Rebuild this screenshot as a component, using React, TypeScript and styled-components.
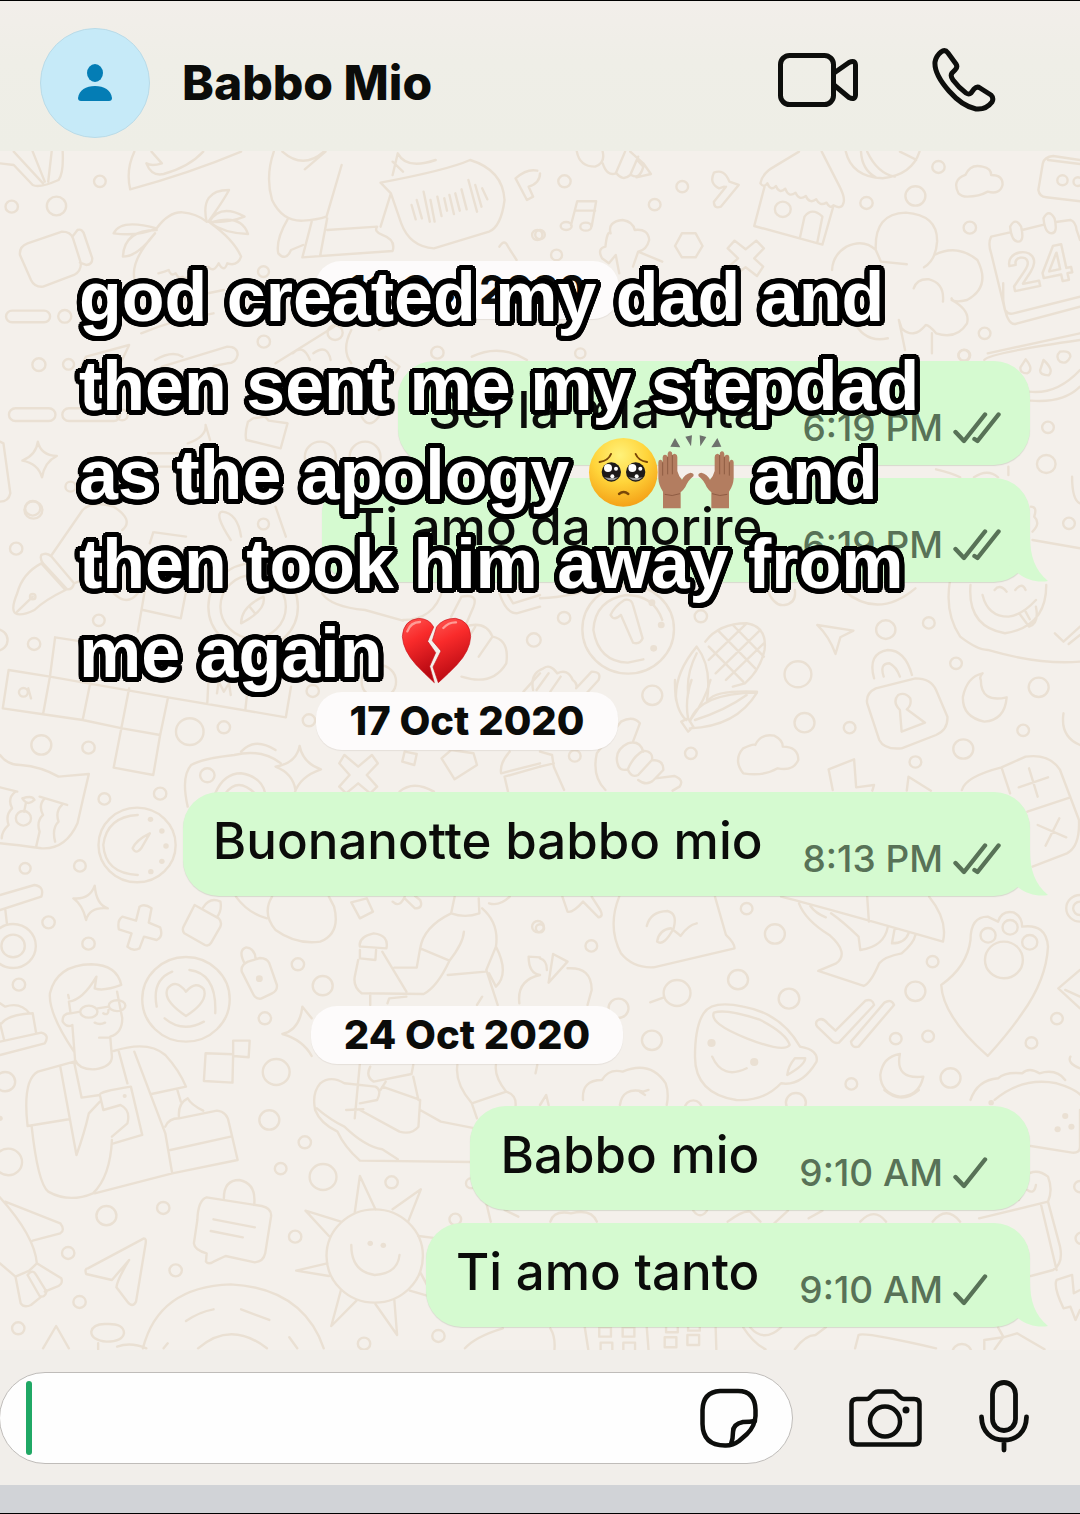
import React from "react";
import styled, { createGlobalStyle } from "styled-components";

const sans = `Inter, "Liberation Sans", sans-serif`;

const GlobalStyle = createGlobalStyle`
  *, *::before, *::after { box-sizing: border-box; }
  body { margin: 0; background: #f4f0eb; }
`;

const Screen = styled.div`
  display: flex;
  flex-direction: column;
  min-height: 100vh;
  overflow: hidden;
  font-family: ${sans};
  color: #0b0c0a;
  border-top: 1px solid #000;
  border-bottom: 1px solid #000;
`;

const Header = styled.header`
  display: flex;
  align-items: center;
  height: 150px;
  padding: 14px 84px 0 40px;
  background: linear-gradient(180deg, #f2eeea 0%, #efeee7 40%, #eeeee6 100%);
`;

const Avatar = styled.div`
  display: grid;
  place-items: center;
  width: 110px;
  height: 110px;
  border: 1px solid #b9dbe8;
  border-radius: 50%;
  background: #c6eaf8;
`;

const Contact = styled.h1`
  flex: 1;
  margin: 0 0 0 32px;
  font-size: 48px;
  font-weight: 800;
  line-height: 56px;
`;

const IconButton = styled.button`
  display: flex;
  padding: 0;
  border: 0;
  background: none;
  color: #0d0e0c;
`;

const HeaderActions = styled.div`
  display: flex;
  align-items: center;
  gap: 74px;
  padding-bottom: 6px;
`;

const Chat = styled.main`
  position: relative;
  flex: 1;
  display: flex;
  flex-direction: column;
  gap: 110px;
  padding: 110px 50px 23px 16px;
  background: #f4f0eb;
`;

const Wallpaper = styled.svg`
  position: absolute;
  inset: 0;
  width: 100%;
  height: 100%;
`;

const Day = styled.section`
  position: relative;
  display: flex;
  flex-direction: column;
  gap: 42px;
`;

const DateRow = styled.div`
  display: flex;
  justify-content: center;
  padding-right: 112px;
`;

const DatePill = styled.time`
  padding: 0 33px;
  border-radius: 26px;
  background: #fdfbfb;
  box-shadow: 0 1px 1px rgba(60, 40, 20, 0.08);
  font-size: 40px;
  font-weight: 800;
  line-height: 58px;
`;

const Messages = styled.div`
  display: flex;
  flex-direction: column;
  align-items: flex-end;
  gap: 13px;
`;

const Bubble = styled.div`
  position: relative;
  display: flex;
  align-items: flex-end;
  gap: 40px;
  height: 104px;
  padding: 0 29px 0 30px;
  border-radius: 36px;
  background: #d5fad0;
  box-shadow: 0 1px 1px rgba(40, 70, 30, 0.14);
`;

const MessageText = styled.p`
  margin: 0;
  padding-bottom: 25px;
  font-size: 51px;
  font-weight: 540;
  line-height: 60px;
  white-space: nowrap;
`;

const Meta = styled.span`
  display: flex;
  align-items: center;
  gap: 10px;
  padding-bottom: 16px;
  color: #587257;
  font-size: 37px;
  font-weight: 540;
  line-height: 42px;
  white-space: nowrap;
`;

const Tail = styled.svg`
  position: absolute;
  right: -18px;
  bottom: 0;
  width: 48px;
  height: 46px;
`;

// Offsets on a ring of about five pixels: together they give letters a soft-cornered outline.
const ring = [[5, 0], [5, 1], [5, 2], [4, 3], [4, 4], [3, 4], [2, 5], [1, 5], [0, 5], [3, 0], [0, 3], [2, 2]];
const outline = ring
  .flatMap(([x, y]) => [[x, y], [-x, y], [x, -y], [-x, -y]])
  .map(([x, y]) => `${x}px ${y}px 0 #000`)
  .join(", ");

const Caption = styled.p`
  position: absolute;
  left: 79px;
  top: 102px;
  margin: 0;
  font-family: "Liberation Sans", Arial, sans-serif;
  font-size: 70px;
  font-weight: 700;
  line-height: 89px;
  color: #fff;
  white-space: nowrap;
  text-shadow: ${outline};
`;

const CaptionLine = styled.span`
  display: block;
`;

const Emoji = styled.svg<{ $w: number; $drop: number }>`
  width: ${(p) => p.$w}px;
  height: ${(p) => p.$w}px;
  vertical-align: -${(p) => p.$drop}px;
  overflow: visible;
`;

const Composer = styled.footer`
  display: flex;
  align-items: center;
  height: 135px;
  padding-right: 51px;
  background: #f1eeea;
`;

const Field = styled.div`
  flex: 1;
  min-width: 0;
  display: flex;
  align-items: center;
  height: 92px;
  padding: 0 34px 0 26px;
  border: 1px solid #bfbcb9;
  border-radius: 46px;
  background: #fefefe;
  margin-left: -1px;
`;

const Caret = styled.span`
  width: 6px;
  height: 74px;
  border-radius: 3px;
  background: #20a865;
`;

const TextBox = styled.input`
  flex: 1;
  width: 100%;
  min-width: 0;
  height: 74px;
  padding: 0 16px;
  border: 0;
  outline: 0;
  background: transparent;
  caret-color: transparent;
  font: 500 50px/60px ${sans};
`;

const ComposerActions = styled.div`
  display: flex;
  align-items: center;
  gap: 57px;
  padding-left: 56px;
`;

const Keyboard = styled.div`
  height: 28px;
  background: #d1d3d7;
`;

const Patch = ({ x, y, d, c = [], dots = [], children }: {
  x: number;
  y: number;
  d: string;
  c?: number[][];
  dots?: number[][];
  children?: React.ReactNode;
}) => (
  <g transform={`translate(${x} ${y}) scale(0.3444 0.3333)`}>
    <path d={d} vectorEffect="non-scaling-stroke" />
    {c.map(([cx, cy, r], i) => (
      <circle key={i} cx={cx} cy={cy} r={r} vectorEffect="non-scaling-stroke" />
    ))}
    {dots.map(([cx, cy, r], i) => (
      <circle key={i} cx={cx} cy={cy} r={r} fill="#eae0d3" stroke="none" />
    ))}
    {children}
  </g>
);

const Doodles = () => (
  <Wallpaper
    viewBox="0 151 1080 1199"
    preserveAspectRatio="xMidYMin slice"
    fill="none"
    stroke="#eae0d3"
    strokeWidth="2.4"
    strokeLinecap="round"
    strokeLinejoin="round"
    aria-hidden="true"
  >
    <Patch
      x={540}
      y={0}
      c={[[71,544,18],[413,560,17],[333,614,17],[1157,501,18],[1090,588,29],[948,609,18],[1248,683,18],[1291,1000,17],[0,704,14],[48,765,16],[1231,1066,16],[705,628,23],[1517,541,15],[1562,545,13]]}
      d="M107 455Q115 500 160 500Q190 490 182 455M182 490Q195 530 220 520L247 455M222 520Q240 545 262 525L285 470M265 525Q290 540 300 500L282 480M262 455L300 490L322 522L280 532
      M90 675L108 604L163 604L150 680M103 632L160 632M60 678a16 12 0 1 0 32 0a16 12 0 1 0 -32 0M117 680a16 12 0 1 0 32 0a16 12 0 1 0 -32 0
      M505 518Q535 505 550 545L577 555L525 620Q505 628 505 605L540 560M505 518Q490 550 520 565L535 560
      M752 455L680 500Q645 520 640 550q10 15 20 0q10 25 25 8q10 25 27 8q10 28 30 12q10 25 30 10q10 25 30 10q10 22 30 10q10 20 20 8q25 15 30-10Q885 590 870 560L818 455M652 560L622 678L820 734L852 618M755 712L768 650Q790 620 820 650L805 728
      M888 455Q905 530 995 535Q1080 525 1102 455M932 455Q935 510 975 532M950 455Q980 520 1030 530M1045 455Q1085 475 1092 480
      M1215 580Q1195 540 1235 525Q1250 490 1285 500Q1310 505 1310 525Q1345 525 1343 555Q1335 585 1300 575Q1275 590 1240 590Q1225 590 1215 580Z
      M1568 480L1490 468Q1465 470 1460 490L1447 570Q1450 590 1470 592L1568 604M1475 480L1568 492
      M412 700L452 700L472 738L452 772L412 772L392 738Z
      M190 740Q195 690 205 700Q195 665 240 660Q270 665 275 690Q315 685 317 720Q310 750 285 755L270 800M190 740Q165 745 180 775L200 790L220 765L230 820M285 755L355 785
      M545 745L565 722L597 748L628 722L650 745L622 775L648 800L630 828L597 802L570 822L548 800L575 775Z
      M975 750Q970 640 1062 638Q1155 645 1153 725Q1150 780 1115 802M1145 765Q1210 730 1270 780Q1310 860 1240 900Q1200 910 1195 895M975 750Q940 715 890 740Q850 765 848 810M975 750L990 785L1065 793M1085 865Q1095 835 1130 838Q1175 850 1170 905M1195 900Q1250 930 1240 970Q1210 1020 1150 1000Q1130 975 1120 975Q1085 1020 1050 985L1042 960L1060 1050M1138 1000L1138 1060M910 960Q940 1030 1010 1015
      M1365 697L1310 710Q1300 730 1310 760L1350 930Q1360 945 1375 940L1568 890M1400 690L1463 674M1498 666L1540 660Q1555 665 1558 690L1568 720M1345 850L1345 900Q1355 975 1380 972L1568 920M1365 680q15-30 32 0q10 45-8 45q-20 0-24-45M1462 655q15-30 32 0q10 45-8 45q-20 0-24-45M1300 1060L1568 1000"
    >
      <text
        x="1370"
        y="875"
        transform="rotate(-12 1370 875)"
        fontFamily="Inter, sans-serif"
        fontSize="150"
        fontWeight="600"
        strokeWidth="7"
      >
        24
      </text>
    </Patch>
    <Patch
      x={0}
      y={150}
      c={[[290,94,17],[34,170,18],[164,168,28],[188,499,19],[766,575,18],[113,644,19],[199,643,16],[973,548,22],[1270,608,18],[765,365,16],[355,795,16],[1560,255,15],[205,1010,15],[95,1075,22],[1060,920,45],[930,920,45]]}
      d="M0 40L40 45L95 105Q115 115 170 90Q185 70 182 5M40 5L125 100M95 5L130 95M150 5L140 95
      M378 118Q365 60 390 5M378 118Q550 70 700 5M440 5L470 40Q440 50 425 40Q440 80 475 72Q550 50 590 5
      M795 5Q770 80 790 150Q820 215 880 212Q920 210 948 200L992 45M835 208Q800 270 808 310Q830 335 845 300L880 285M905 215L878 322L1140 303Q1150 270 1110 255Q1085 245 1095 230L950 240M950 205L930 315M1105 230L1135 130M820 5Q880 60 940 5M945 5L885 58
      M1105 98Q1300 60 1365 30Q1460 60 1465 150Q1455 230 1420 245L1260 295Q1190 290 1165 220L1135 130ZM1140 75L1155 10Q1180 60 1265 30M1140 35L1170 65
      M1195 165L1207 208M1210 150L1225 205M1230 125L1248 215M1250 150L1262 215M1270 140L1282 198M1290 145L1298 182M1305 135L1318 192M1322 130L1335 182M1340 118L1355 178M1360 90L1385 185M1380 105L1398 170M1400 115L1415 148
      M1497 85L1530 150L1548 140L1535 110Q1568 100 1568 70M1497 85Q1530 55 1560 62M1450 290q15-25 25 0l25 40
      M455 235Q490 185 530 187Q570 190 600 215M330 250Q350 205 455 235Q400 260 330 250M455 240Q360 240 357 320Q400 320 450 250Q380 330 390 385M600 215Q580 120 665 120Q650 150 605 215M608 215Q640 160 710 200Q660 220 608 215M610 218Q700 190 720 252Q650 250 610 218Q680 270 700 320Q690 350 660 340q-10 30-25 0q-15 30-30 10M460 370q20-5 30-10q5 20 20 10q10 20 20 10q10 15 30-20
      M80 280L180 245Q205 245 212 265L235 340Q235 365 215 375L125 410Q100 412 90 390L58 315Q55 290 80 280ZM210 260L225 240Q240 235 245 255L268 325Q268 345 250 345L232 338
      M35 482H128a17 17 0 0 1 0 35H35a17 17 0 0 1 0-35ZM45 775H142a18 18 0 0 1 0 38H45a18 18 0 0 1 0-38ZM200 775H330a18 18 0 0 1 0 38H200a18 18 0 0 1 0-38Z
      M410 550Q500 510 620 490M420 475Q550 440 650 420M470 650L660 590Q690 590 690 615Q685 640 660 640L620 648M375 585L250 620L230 660M375 585L350 640M450 630Q500 600 530 620
      M110 875Q118 915 165 918Q130 935 122 982Q110 940 65 932Q105 915 110 875ZM597 825Q600 860 545 880M597 825L610 870
      M720 815Q710 850 715 870L815 895L835 820L780 812L770 800L735 805ZM0 875L10 880L30 1030Q25 1055 0 1055
      M800 640L970 530M850 610Q880 580 900 630M910 610Q950 580 960 630M1020 540Q990 600 1020 640M1100 540Q1140 520 1160 500M1370 620Q1450 580 1530 630M1120 620L1160 650L1130 700M1050 800Q1070 840 1100 800M430 910H520M440 950H510"
    />
    <Patch
      x={540}
      y={340}
      c={[[1232,46,17],[1475,262,17],[1470,372,27],[1536,550,17],[70,834,18],[467,829,18],[1004,869,28],[1129,849,17],[749,1003,39],[1208,970,17],[117,40,15],[256,868,133]]}
      dots={[[325,788,10],[352,855,10],[330,925,10]]}
      d="M1290 60Q1300 40 1568 0M1420 155Q1500 165 1568 90M1425 182Q1520 190 1568 140M1410 58q25 30 5 42q-22 0-20-18ZM1462 60q32 30 15 46q-25 0-25-15ZM1510 35q30-5 30 15q-10 25-30 15q-15-15 0-30
      M355 840Q330 765 250 765Q160 780 155 870Q170 965 255 968L300 958M205 825Q215 800 245 780Q265 775 270 795L298 895Q290 915 270 908L235 825Q215 845 205 825
      M395 1080Q390 1000 455 920Q500 980 485 1080M430 1060Q425 1000 455 940M480 905Q520 850 600 850Q660 860 652 930Q640 990 595 1030L560 1040M520 875L625 985M560 855L650 950M490 920L590 1025M600 850L490 960M640 870L510 1000M650 910L540 1020M490 1080Q510 1050 630 1055
      M805 855L910 872L872 892L858 942Q840 890 805 855ZM970 1015Q950 940 1010 930Q1060 930 1080 1005M998 1010Q985 970 1015 970Q1035 980 1045 1010
      M1190 725Q1175 820 1220 890Q1270 930 1300 930Q1450 975 1568 965M1250 735Q1240 860 1350 880Q1470 860 1470 735M1285 765Q1300 830 1360 830Q1400 825 1440 780M1395 825L1420 860Q1450 850 1440 800M1410 815L1422 838M1320 750q15-20 35 5M1380 750q20-25 30 0
      M1495 880L1520 905L1568 860M1535 912L1568 885M1430 600L1568 625M1545 410Q1545 480 1568 490M1150 388Q1200 400 1220 412M1260 412Q1300 385 1330 412M1360 380V405M1425 500q20 0 10 30q20 20-5 45
      M660 750Q680 800 710 795Q745 790 740 750M880 750Q980 840 1090 745M0 775Q100 770 160 740
      M-20 1050Q-30 1000 10 985Q30 970 50 1000Q80 985 95 1020Q110 1030 105 1045L150 995Q180 995 170 1020L135 1060M-10 1050L25 1000M30 1055L60 1010"
    />
    <Patch
      x={0}
      y={500}
      c={[[97,30,26],[47,146,18],[287,361,17],[99,432,18],[-10,420,32],[120,735,29],[257,743,18],[551,695,40],[650,682,18],[908,573,18],[897,661,18],[602,826,21],[303,897,17],[465,881,18],[73,1105,16],[232,1098,17],[765,72,16],[1550,420,20],[735,320,95],[735,320,130],[95,290,8],[68,955,22],[398,1035,112],[68,577,13],[1100,545,50]]}
      dots={[[437,958,8],[470,993,8],[482,1038,8],[470,1084,8],[438,1115,8]]}
      d="M45 340Q30 330 50 280Q65 220 120 190L190 270Q130 300 100 330Q60 350 45 340ZM50 335L95 290M120 165Q135 155 150 170L215 250Q210 270 195 268L125 190Q115 175 120 165M150 165L240 30Q270 0 330 20Q390 60 355 90M215 250L240 240M330 280Q370 320 400 280
      M160 412L145 530L125 643M25 510L145 530L488 592L830 652L845 560M8 625L125 643L240 660L355 685L465 705L445 825L330 803L375 565M25 510L8 625M265 535L240 660M488 592L465 705M160 412L240 425M445 97L435 130M450 97L540 110M415 330L525 355M400 395L420 275M525 355L540 275M605 545L602 608M720 560L712 632M82 565L90 595M630 580L635 545L650 575L665 550L670 585
      M700 370Q700 320 765 290Q775 330 700 370ZM725 320L740 340M670 120Q620 40 645 35Q690 40 700 110M800 20L830 110
      M935 280Q960 320 1060 330L1170 362M1170 360Q1260 360 1285 270M1340 290Q1390 280 1375 320L1350 380Q1410 360 1430 410Q1480 420 1470 490Q1430 560 1340 530M1340 290L1310 350M1380 380L1350 430M1430 410L1390 470M1450 280Q1470 340 1500 340L1568 320M1475 285L1490 310L1568 285M1520 575L1568 520
      M545 920Q525 830 555 795Q590 775 680 765Q760 745 815 790M700 755Q740 710 800 750M625 880Q650 820 700 820Q760 830 770 880M655 880Q690 830 740 880
      M870 738Q880 790 932 808Q870 830 855 880M870 738Q860 790 800 800Q850 820 858 870
      M1000 765L1040 800L1080 765L1097 790L1065 825L1095 860L1075 880L1040 850L1005 880L985 860L1015 825L985 790Z
      M1175 755L1210 762L1203 795L1168 785ZM1310 750L1375 760L1385 795L1320 838L1282 775ZM1480 755Q1450 790 1455 820L1568 790M1465 830L1475 875M1465 830L1568 800M1160 875Q1200 840 1260 875
      M0 765Q20 795 60 795Q120 800 170 830L258 822Q240 900 225 970Q190 1050 120 1045Q50 1035 0 1030M0 862L50 875M115 890L195 915M45 875q-25 20-10 50q-20 20-10 50q-20 20-20 40M130 895q-20 20-5 50q-20 20-10 50l-10 45M180 915q-20 20-10 50q-20 20-10 60M65 895q30-10 35 5q-20 20-35-5M75 910L70 935
      M400 945Q310 950 300 1035Q305 1120 400 1125M435 1000Q395 1020 385 1045Q395 1065 410 1045Z"
    />
    <Patch
      x={540}
      y={680}
      c={[[326,46,29],[768,128,29],[899,143,17],[1229,207,29],[1090,246,17],[1403,151,17],[438,220,17],[101,228,17],[1448,22,29],[600,686,17],[682,762,29],[149,798,17],[0,745,12],[575,899,29],[398,939,39],[723,956,30],[228,985,29],[325,1081,29],[1140,845,17],[1090,934,29],[1033,1076,17],[1127,1069,17],[1501,1016,17],[1427,1089,17],[904,1212,17],[1192,1194,29],[743,1268,29],[1301,766,22],[1365,742,22],[1422,787,22],[1347,840,55],[1568,685,40],[1568,685,20]]}
      dots={[[498,1089,12],[622,1146,12]]}
      d="M320 967L360 952M392 0Q390 90 425 120M435 125Q460 40 630 38Q570 140 435 145M440 0Q420 60 430 115M440 115Q480 60 495 0M450 120Q540 90 600 45M410 125L430 115L445 140L430 155Z
      M950 70Q945 40 975 25L1090-5Q1135-5 1150 30L1183 110Q1185 150 1150 165L1050 205Q1000 210 985 180ZM1045 90Q1022 65 1040 45Q1060 35 1075 55Q1080 75 1065 88L1118 128L1050 155Z
      M1280 0Q1280 70 1355 52Q1350 120 1290 125Q1225 110 1228 50Q1240-10 1285-20Q1275-10 1280 0
      M590 280Q560 240 590 205Q620 190 625 195Q640 160 680 167Q705 180 705 200Q750 200 750 240Q735 275 690 265Q650 290 590 280Z
      M190 330Q150 290 165 220L235 125Q270 105 290 130L270 185M225 250Q215 210 255 190Q290 180 300 215M225 250Q230 275 255 268Q270 230 300 212Q330 215 325 240M255 268Q265 295 285 285L325 240Q360 240 358 270L330 300Q310 320 285 300M335 295L390 288Q420 300 405 320L385 332M0 215L35 225L40 260L70 330M0 260L40 250
      M850 330L838 268L912 238L918 322L970 315L965 332M1065 332L1070 290L1135 332
      M1225 330Q1235 290 1340 262L1410 230Q1480 220 1510 270L1565 420Q1568 500 1530 520L1430 560M1340 262L1365 340M1415 395L1540 352M1390 322L1475 292M1420 265L1445 350M1445 435L1528 472M1508 415L1468 497M1520 100Q1510 170 1568 195
      M230 650Q195 740 235 820Q270 865 330 862L565 805Q565 790 540 765L508 650M310 738Q320 695 370 693Q400 700 388 745Q360 800 340 785Q345 750 380 745Q400 760 408 768Q430 735 455 730
      M65 650L80 695Q95 700 125 665L170 712Q185 710 175 690L150 650
      M700 650Q850 690 1170 785Q1185 720 1130 650M752 670Q770 720 840 765Q900 820 860 850L808 873L940 918Q960 910 985 850Q1000 830 1050 820Q1085 790 1090 765M785 678Q800 700 830 712M845 700Q880 725 925 770L930 810Q1000 800 1010 740M950 650L955 725M1030 745L1022 790Q1060 790 1070 760
      M1165 915Q1240 860 1250 780Q1250 710 1300 710Q1320 720 1330 725Q1340 690 1375 697Q1400 710 1400 740Q1470 730 1475 800Q1470 900 1400 1000Q1360 1060 1300 1128Q1170 1010 1165 915Z
      M1505 925L1568 870M1505 925L1568 985M1525 930L1568 950M25 908L38 822L80 845L25 908M80 865Q150 860 150 930L138 975M0 835Q20 840 20 870
      M450 1130Q450 1040 475 1000Q500 960 590 980Q700 1000 755 1100Q810 1110 803 1145Q760 1220 700 1210Q650 1265 570 1260Q450 1240 450 1130ZM505 998Q490 1030 600 1075Q710 1120 725 1095Q715 1060 640 1020Q540 985 505 998ZM740 1135L770 1135Q770 1155 718 1185Q720 1160 740 1135ZM500 1130Q530 1200 600 1165
      M805 1022Q820 1010 835 1030L858 1052L945 962Q965 955 970 975L868 1088Q855 1092 845 1080L805 1040Q798 1030 805 1022ZM1000 968Q1020 955 1028 975L925 1100Q905 1105 903 1085Z
      M1045 1122Q1030 1200 1113 1190Q1100 1250 1045 1250Q990 1240 988 1185Q995 1130 1045 1122
      M125 1260Q120 1200 180 1200Q200 1165 240 1175Q320 1140 365 1210Q375 1240 368 1275M232 1275Q240 1220 300 1235L315 1230M290 1235L305 1245
      M1250 1260Q1270 1200 1330 1195Q1350 1175 1400 1180Q1420 1160 1450 1180Q1500 1165 1525 1200M1320 1260Q1400 1190 1500 1210Q1568 1230 1580 1260M1568 1165Q1530 1150 1540 1130"
    />
    <Patch
      x={0}
      y={870}
      c={[[141,157,18],[257,221,18],[38,228,34],[38,228,66],[55,344,18],[865,283,18],[937,347,29],[769,445,18],[802,606,39],[782,750,29],[885,817,18],[815,896,17],[938,921,39],[1137,937,18],[15,635,29],[24,876,40],[309,1037,29],[474,1014,18],[857,1100,18],[1368,940,15],[1322,1048,17],[1562,170,17],[540,388,127]]}
      dots={[[753,326,10],[362,678,6],[0,745,8]]}
      d="M0 75L100 45Q130 50 120 80L0 120M15 115L20 160M275 47Q280 105 313 115Q260 110 250 150Q240 105 213 85Q260 90 275 47Z
      M405 110Q420 100 440 115L432 158L465 172Q475 200 455 210L418 200L405 235Q385 245 370 230L382 190L345 178Q340 150 355 140L395 152Z
      M565 105L635 145Q645 155 640 170L612 220Q605 230 595 225L535 190Q528 180 533 170ZM590 112Q610 80 640 95Q645 120 630 142
      M720 275L755 264Q775 264 782 280L804 345Q806 362 790 370L758 386Q742 388 735 372L702 305Q698 285 720 275ZM710 280Q690 240 715 232Q740 235 742 266
      M540 438Q470 390 487 355Q510 325 540 365Q570 330 592 358Q605 395 540 438ZM455 410Q440 330 500 305M550 300Q630 310 625 430M478 445Q530 490 592 455
      M685 80Q720 130 775 145M790 80Q760 130 800 180Q860 225 930 215Q990 190 970 110L955 80
      M0 400L15 410Q60 395 85 430M5 460Q20 435 95 430L105 490M0 460L12 510M0 515L120 488Q145 495 130 520L0 555
      M215 545Q140 430 145 370Q165 285 265 283Q340 285 352 345Q300 365 275 355L280 320Q240 390 200 395L205 430Q180 430 182 455Q195 475 210 465L218 570Q230 600 275 598Q325 590 325 560L320 500Q355 490 355 445L340 365M200 385L198 375M233 425a25 18 0 1 0 50 0a25 18 0 1 0-50 0M316 407a22 15 0 1 0 48 0a22 15 0 1 0-48 0M283 415L316 410M205 430L233 425M275 458q15 8 30 0M300 430q15 8 15-10M288 503H320
      M80 768Q65 630 110 605L215 575M330 543Q430 510 480 555Q520 600 540 650L440 672M390 545L480 790L500 910L275 970M80 768L200 748M175 590L222 855M215 575L237 683L290 675M345 545L370 640M92 770Q110 940 140 965Q200 1000 270 970Q320 920 325 810M222 855Q245 790 258 730L290 695M290 675Q285 665 380 650L413 795L325 822M290 675L300 720L350 705Q380 720 370 760L325 800
      M480 770Q490 745 520 745L630 722Q660 725 665 760L690 870L500 910M495 840L670 800M520 745Q515 700 545 685Q555 705 590 722M515 660L525 695
      M597 550L677 553L675 638L592 633ZM677 512L725 512L722 562L677 558ZM878 410Q870 480 820 492Q880 510 905 558M878 410L905 445
      M1020 97L1065 85L1083 125L1045 145ZM1140 95q20 20 35-15M1175 85l30 30q25 0 15-25l-15-12M1420 100q30 10 60-20
      M1310 130Q1230 170 1220 235L1305 272Q1345 220 1347 185M1220 235L1210 293L1145 293M1305 272Q1270 350 1230 372L1050 370Q1025 350 1030 320L1040 270M1300 315L1410 305M1400 115Q1450 160 1440 230L1412 300L1445 405M1320 80L1310 130Q1350 145 1392 130L1390 85M1440 230Q1480 310 1440 350L1420 310M1045 230Q1040 200 1085 190Q1130 195 1122 235L1050 230M1110 245L1180 365M1045 240L1045 265L1090 270L1092 240M1075 370L1075 405M1125 400L1130 385L1180 380M1385 405L1400 380
      M1045 580L1030 745M1005 720L1055 718M930 640Q960 615 1000 640L1090 650Q1110 660 1095 690L1045 700M930 640Q905 670 915 720Q930 760 980 785Q1000 830 1045 872L1370 876M920 715Q960 750 1000 770Q1060 830 1110 838L1155 868M1110 650L1220 690L1215 770Q1195 795 1160 785L1045 720M1075 590Q1060 620 1085 635L1195 612L1200 585M1120 635L1105 660M1200 620L1215 690M1220 720L1280 755L1380 775M1328 585Q1320 640 1370 700L1385 745M1440 585Q1435 620 1470 665L1370 700M1470 665Q1500 675 1497 708
      M1568 262L1535 260Q1535 310 1568 315Q1500 330 1508 400M1560 585L1555 610
      M650 985Q650 930 695 930Q745 940 738 1005"
    />
    <Patch
      x={0}
      y={1200}
      c={[[198,159,18],[510,211,18],[231,306,18],[53,385,18],[1057,431,18],[1273,408,18],[1088,168,140]]}
      dots={[[1075,130,8],[1113,136,8]]}
      d="M600-8Q575 0 573 60L563 130Q565 150 600 160L598 185Q605 195 620 185L655 168L740 187Q765 185 770 160L787 50Q790 25 760 18ZM620 58L740 82M612 93L705 112
      M418 115Q425 115 423 130L395 305Q385 325 370 305L338 262Q340 240 375 180L325 240L250 222Q245 205 255 205Z
      M15 5L175 70Q190 90 175 100L95 122M-20-30Q100 100 107 190L178 235Q185 255 160 262L130 275M0 190L45 230L85 212M45 230L60 310Q70 325 90 315L120 290M80 225Q95 205 105 225L135 275Q130 295 115 288ZM85 212L107 190
      M990 65L887 32L955 108M950 190L860 212L955 228M990 270L962 378L1035 302M1090 312L1153 405L1145 300M1190 272L1250 290M1222 220L1245 265M1215 108L1270 115M1030 38L1045-72L1090 28M1140 28L1222-32L1185 65M1020 135Q1020 215 1088 225Q1155 220 1160 165
      M415 445Q460 260 670 253Q880 265 940 445M575 445Q670 360 775 445M540 363Q580 335 620 328M700 328L782 360M475 445L487 430M840 412L863 445M125 445L163 378L200 445
      M265 395Q270 370 310 372Q360 370 360 400Q355 425 310 425Q265 420 265 395ZM285 430L285 448M340 440Q380 425 425 445M1350 445Q1380 410 1460 385M1410 0L1425 65M1465 30L1505 50"
    />
    <Patch
      x={540}
      y={1090}
      c={[[445,56,25],[1568,290,17],[1572,445,17],[1225,790,28]]}
      dots={[[1525,78,9],[1503,118,9],[1543,110,9],[1310,38,8]]}
      d="M0 45L18 15L25 45M1000 0Q1050 45 1100 0M1568 60L1568 170M1425 168L1545 188Q1568 190 1568 170
      M1275 385L1475 335L1510 470Q1520 520 1490 540L1425 558M1455 345L1500 540M1390 330L1400 310M1405 260Q1440 230 1475 260Q1490 300 1475 335M1415 300q20 15 25-15
      M1500 570L1545 555L1550 610L1568 600M1500 570Q1490 590 1520 655L1540 650L1555 690L1568 660
      M30 395Q40 360 90 370Q150 355 165 395M445 362Q465 390 485 362M545 395Q590 360 610 365L640 395M680 400L720 362M780 385L820 362M930 395Q970 350 1005 395M1140 395Q1180 345 1220 395
      M30 715Q45 740 42 778M130 712L140 778M310 712L315 778M510 712L512 778M172 712h34v28h-34ZM240 712h34v28h-34ZM176 790v-32h34v32M242 790v-32h34v32M362 742h34v30h-34ZM428 735h34v30h-34ZM366 712v15h34v-15M430 712v10h34v-10
      M590 712Q620 760 655 778M610 712Q650 760 700 712M740 778Q770 735 800 735L830 712M915 775L925 735Q940 725 1150 775M1330 712L1345 740M1290 778L1290 750L1345 742L1320 778M1345 742L1385 730L1465 778"
    />
  </Wallpaper>
);

const line = { fill: "none", stroke: "currentColor", strokeLinecap: "round", strokeLinejoin: "round" } as const;

const PersonIcon = () => (
  <svg width="34" height="38" viewBox="0 0 34 38" fill="#047db5" aria-hidden="true">
    <ellipse cx="17" cy="9" rx="8" ry="9" />
    <path d="M0 34C1 26 8 22 17 22s16 4 17 12c0 2-1 3-3 3H3c-2 0-3-1-3-3z" />
  </svg>
);

const VideoIcon = () => (
  <svg width="80" height="54" viewBox="0 0 80 54" strokeWidth="5" {...line} aria-hidden="true">
    <rect x="2.5" y="2.5" width="53" height="49" rx="9" />
    <path d="M56 20L71 9.500Q77 6.500 77.500 12V42Q77 47.500 71 44.500L56 32" />
  </svg>
);

const PhoneIcon = () => (
  <svg width="64" height="64" viewBox="0 0 64 64" strokeWidth="5" {...line} aria-hidden="true">
    <path d="M9 4Q13 1 16 5L24 16Q26 19 23 22L20 25Q18 28 21 32Q27 40 34 45Q37 47 39 45L42 41Q45 38 48 40L59 47Q62 50 60 54Q54 62 44 61Q30 58 17 43Q2 26 3 14Q4 8 9 4Z" />
  </svg>
);

const StickerIcon = () => (
  <svg width="58" height="60" viewBox="0 0 58 60" strokeWidth="4.500" {...line} aria-hidden="true">
    <path d="M20 3H38Q55 3 55.500 22V28Q55 38 47 46L39 53Q33 57.500 26 57.500Q3 58 2.500 36V22Q3 4 20 3Z" />
    <path d="M55 33Q50 34 43 34Q33 36 33 44Q33 51 31 56" />
  </svg>
);

const CameraIcon = () => (
  <svg width="73" height="58" viewBox="0 0 73 58" strokeWidth="4.500" {...line} aria-hidden="true">
    <path d="M8 10H18Q20 10 22 7L25 4Q27 2.500 29 2.500H44Q46 2.500 48 5L51 8Q53 10 55 10H65Q70.500 10 70.500 15V50Q70.500 55.500 65 55.500H8Q2.500 55.500 2.500 50V15Q2.500 10 8 10Z" />
    <circle cx="36" cy="32.500" r="15" />
    <circle cx="57" cy="21" r="3.500" fill="currentColor" stroke="none" />
  </svg>
);

const MicIcon = () => (
  <svg width="50" height="75" viewBox="0 0 50 75" strokeWidth="4.800" {...line} aria-hidden="true">
    <rect x="13.500" y="2.500" width="23" height="48" rx="11.500" />
    <path d="M2.500 37C3 52 12 60 25 60S47 52 47.500 37M25 60V70" />
  </svg>
);

const Ticks = ({ double }: { double: boolean }) => (
  <svg width="48" height="32" viewBox="-1 -1 48 32" strokeWidth="4.400" {...line} role="img" aria-label={double ? "Delivered" : "Sent"}>
    <path d="M1.500 19L10 28L31 1.500" />
    {double && <path d="M20.500 26L23.500 28L44.500 1.500" />}
  </svg>
);

const PleadingFace = () => (
  <Emoji $w={69} $drop={8} viewBox="0 0 207 207" stroke="none" role="img" aria-label="pleading face">
    <defs>
      <radialGradient id="face" cx="45%" cy="25%" r="80%">
        <stop offset="0" stopColor="#fff27a" />
        <stop offset="0.500" stopColor="#ffd43a" />
        <stop offset="1" stopColor="#f39a12" />
      </radialGradient>
    </defs>
    <circle cx="103" cy="103" r="103" fill="url(#face)" />
    <g fill="none" stroke="#7a4708" strokeWidth="6" strokeLinecap="round">
      <path d="M32 72Q58 68 66 48" />
      <path d="M174 72Q148 68 140 48" />
      <path d="M90 168Q104 156 118 168" strokeWidth="7" />
    </g>
    {[67, 140].map((cx) => (
      <g key={cx}>
        <circle cx={cx} cy="102" r="29" fill="#1d1a1a" />
        <path d={`M${cx - 22} 118Q${cx} 136 ${cx + 22} 118Q${cx} 122 ${cx - 22} 118Z`} fill="#9a9a9a" />
        <circle cx={cx - 10} cy="90" r="12" fill="#fff" />
        <circle cx={cx + 14} cy="92" r="6" fill="#fff" />
        <circle cx={cx + 3} cy="115" r="6" fill="#fff" />
      </g>
    ))}
  </Emoji>
);

const RaisingHands = () => {
  const hand = (
    <>
      <path
        d="M15 220V170Q2 152 1 130V82Q1 73 8 74Q13 75 14 82V66Q15 58 22 59Q28 60 29 66V56Q31 48 37 49Q43 50 43 58V62Q46 55 52 57Q58 58 58 66V108Q62 124 72 134Q80 118 98 113Q110 115 106 124Q92 134 82 156Q74 168 68 172V220Z"
        fill="#b37d60"
      />
      <path d="M14 82V122M29 66V118M43 60V118M20 178Q42 186 66 176" fill="none" stroke="#8f5c43" strokeWidth="3" />
    </>
  );
  return (
    <Emoji $w={76} $drop={12} viewBox="0 0 228 228" stroke="none" role="img" aria-label="raising hands">
      {hand}
      <g transform="translate(228 0) scale(-1 1)">{hand}</g>
      <path d="M51 9L37 35L67 37ZM82 5L102 1L99 34ZM125 1L145 6L127 34ZM178 9L190 35L160 37Z" fill="#6e716d" />
    </Emoji>
  );
};

const BrokenHeart = () => (
  <Emoji $w={69} $drop={10} viewBox="0 0 207 207" stroke="none" role="img" aria-label="broken heart">
    <defs>
      <linearGradient id="heart" x1="0" y1="0" x2="0.300" y2="1">
        <stop offset="0" stopColor="#ff5a55" />
        <stop offset="0.400" stopColor="#f92b2b" />
        <stop offset="1" stopColor="#b80912" />
      </linearGradient>
    </defs>
    <g fill="url(#heart)" stroke="#c9141c" strokeWidth="2">
      <path d="M95 27Q82 2 50 1Q4 6 1 56Q4 98 42 140Q65 164 97 194L83 145L101 104L77 70Z" />
      <path d="M104 26Q124 1 160 1Q204 8 206 56Q204 98 165 140Q142 164 109 194L93 147L117 99L91 68Z" />
    </g>
    <path d="M16 40Q26 12 54 12M124 30Q140 12 162 13" fill="none" stroke="#ff9c96" strokeWidth="7" strokeLinecap="round" />
  </Emoji>
);

type Message = { text: string; time: string; read: boolean };

const days: { date: string; iso: string; messages: Message[] }[] = [
  {
    date: "16 Oct 2020",
    iso: "2020-10-16",
    messages: [
      { text: "Sei la mia vita", time: "6:19 PM", read: true },
      { text: "Ti amo da morire", time: "6:19 PM", read: true },
    ],
  },
  {
    date: "17 Oct 2020",
    iso: "2020-10-17",
    messages: [{ text: "Buonanotte babbo mio", time: "8:13 PM", read: true }],
  },
  {
    date: "24 Oct 2020",
    iso: "2020-10-24",
    messages: [
      { text: "Babbo mio", time: "9:10 AM", read: false },
      { text: "Ti amo tanto", time: "9:10 AM", read: false },
    ],
  },
];

export default function App() {
  return (
    <Screen>
      <GlobalStyle />
      <Header>
        <Avatar>
          <PersonIcon />
        </Avatar>
        <Contact>Babbo Mio</Contact>
        <HeaderActions>
          <IconButton aria-label="Video call">
            <VideoIcon />
          </IconButton>
          <IconButton aria-label="Voice call">
            <PhoneIcon />
          </IconButton>
        </HeaderActions>
      </Header>
      <Chat>
        <Doodles />
        {days.map((day) => (
          <Day key={day.iso}>
            <DateRow>
              <DatePill dateTime={day.iso}>{day.date}</DatePill>
            </DateRow>
            <Messages>
              {day.messages.map((m, i) => (
                <Bubble key={m.text}>
                  {i === day.messages.length - 1 && (
                    <Tail viewBox="0 0 48 46" fill="#d5fad0" aria-hidden="true">
                      <path d="M30 0C30 20 35 34 48 45C38 47 27 44 19 38L8 28L16 0Z" />
                    </Tail>
                  )}
                  <MessageText>{m.text}</MessageText>
                  <Meta>
                    {m.time}
                    <Ticks double={m.read} />
                  </Meta>
                </Bubble>
              ))}
            </Messages>
          </Day>
        ))}
        <Caption>
          <CaptionLine>god created my dad and</CaptionLine>
          <CaptionLine>then sent me my stepdad</CaptionLine>
          <CaptionLine>
            as the apology <PleadingFace />
            <RaisingHands /> and
          </CaptionLine>
          <CaptionLine>then took him away from</CaptionLine>
          <CaptionLine>
            me again <BrokenHeart />
          </CaptionLine>
        </Caption>
      </Chat>
      <Composer>
        <Field>
          <Caret />
          <TextBox aria-label="Message" />
          <IconButton aria-label="Stickers">
            <StickerIcon />
          </IconButton>
        </Field>
        <ComposerActions>
          <IconButton aria-label="Camera">
            <CameraIcon />
          </IconButton>
          <IconButton aria-label="Record voice message">
            <MicIcon />
          </IconButton>
        </ComposerActions>
      </Composer>
      <Keyboard />
    </Screen>
  );
}
